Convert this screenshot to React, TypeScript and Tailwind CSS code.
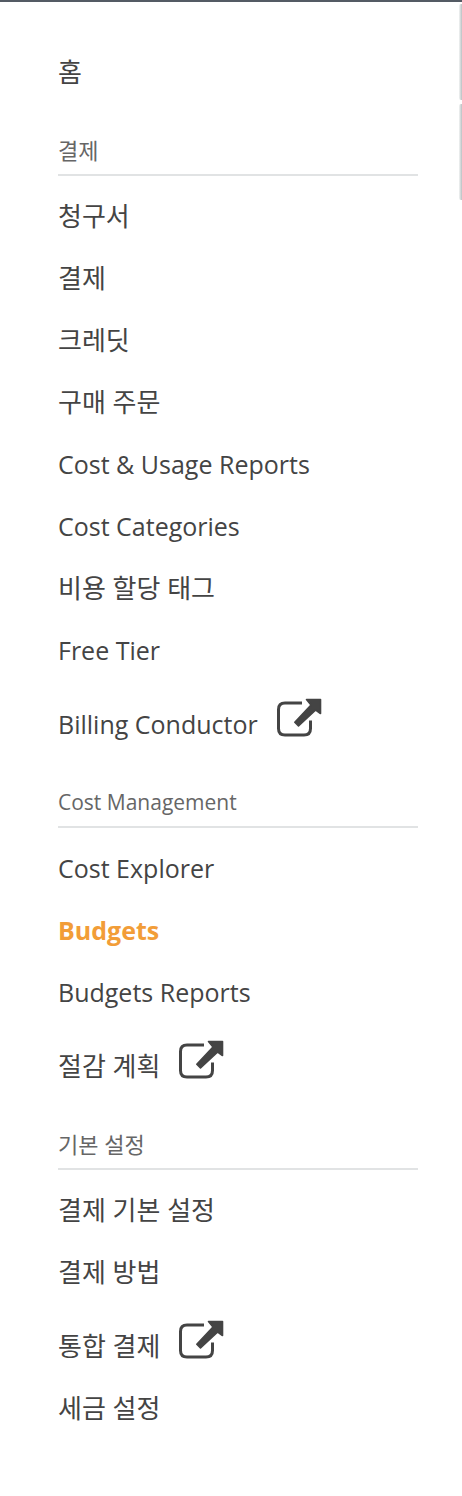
import React from "react";

type Item = { label: string; external?: boolean; active?: boolean };
type Section = { title: string; items: Item[] };

const sections: Section[] = [
  {
    title: "결제",
    items: [
      { label: "청구서" },
      { label: "결제" },
      { label: "크레딧" },
      { label: "구매 주문" },
      { label: "Cost & Usage Reports" },
      { label: "Cost Categories" },
      { label: "비용 할당 태그" },
      { label: "Free Tier" },
      { label: "Billing Conductor", external: true },
    ],
  },
  {
    title: "Cost Management",
    items: [
      { label: "Cost Explorer" },
      { label: "Budgets", active: true },
      { label: "Budgets Reports" },
      { label: "절감 계획", external: true },
    ],
  },
  {
    title: "기본 설정",
    items: [
      { label: "결제 기본 설정" },
      { label: "결제 방법" },
      { label: "통합 결제", external: true },
      { label: "세금 설정" },
    ],
  },
];

const isLatin = (text: string) => /^[A-Za-z]/.test(text);

function ExternalIcon() {
  return (
    <svg className="-mt-3 h-10 w-[46px] shrink-0" viewBox="0 0 46 40" fill="none" aria-hidden="true">
      <path d="M26 5H9Q2.500 5 2.500 11.500V30.500Q2.500 37 9 37H28Q34.500 37 34.500 30.500V22.500" stroke="#444" strokeWidth="3" />
      <path d="M30.500 1.500H44.500V15.500L39.700 12L22.500 28L18.800 24.300L35 7Z" fill="#444" stroke="#444" strokeWidth="1.600" strokeLinejoin="round" />
    </svg>
  );
}

function NavLink({ item }: { item: Item }) {
  return (
    <li className={item.external ? "pt-3" : ""}>
      <a
        href="#"
        aria-current={item.active ? "page" : undefined}
        className={`flex h-[62px] items-center gap-[18px] whitespace-nowrap ${isLatin(item.label) ? "text-[25px]" : "text-[26px]"} ${item.active ? "font-bold text-[#f29d38]" : "text-[#444]"}`}
      >
        {item.label}
        {item.external && <ExternalIcon />}
      </a>
    </li>
  );
}

export default function App() {
  return (
    <div className="flex overflow-hidden border-t-2 border-[#545b64] bg-white font-['Open_Sans','Noto_Sans_CJK_KR',sans-serif] leading-9">
      <nav aria-label="Billing" className="min-w-0 flex-1 pt-[39px] pr-[41px] pb-14 pl-[58px]">
        <ul>
          <NavLink item={{ label: "홈" }} />
        </ul>
        {sections.map((s) => (
          <section key={s.title} className="pt-[31px]">
            <h2
              className={`mb-[9px] border-b-2 border-[#e1e3e4] pb-2 leading-8 text-[#666] ${isLatin(s.title) ? "text-[21px]" : "text-[22px]"}`}
            >
              {s.title}
            </h2>
            <ul>
              {s.items.map((i) => (
                <NavLink key={i.label} item={i} />
              ))}
            </ul>
          </section>
        ))}
      </nav>
      <div className="flex w-[3px] shrink-0 flex-col gap-1 pt-[2px]" aria-hidden="true">
        <div className="h-24 rounded-l-[2px] bg-linear-to-r from-[#f2f4f4] to-[#b9c0c2]" />
        <div className="h-24 rounded-l-[2px] bg-linear-to-r from-[#f2f4f4] to-[#b9c0c2]" />
      </div>
    </div>
  );
}
